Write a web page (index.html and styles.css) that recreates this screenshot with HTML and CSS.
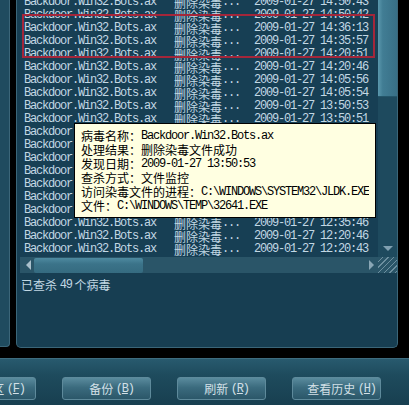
FILE: index.html
```html
<!DOCTYPE html>
<html>

<head>
    <meta charset="UTF-8">
    <title>病毒历史记录</title>
    <link rel="stylesheet" href="styles.css">
</head>

<body>
    <div class="window">
        <div class="main">
            <div class="side-strip"></div>
            <div class="panel">
                <div class="list-wrap">
                    <div class="list-view">
                        <div class="rows">
                            <div class="row"><span class="c-name a">Backdoor.Win32.Bots.ax</span><span class="c-res">删除染毒<span class="a">...</span></span><span class="c-time a">2009-01-27 14:50:43</span></div>
                            <div class="row"><span class="c-name a">Backdoor.Win32.Bots.ax</span><span class="c-res">删除染毒<span class="a">...</span></span><span class="c-time a">2009-01-27 14:50:42</span></div>
                            <div class="row"><span class="c-name a">Backdoor.Win32.Bots.ax</span><span class="c-res">删除染毒<span class="a">...</span></span><span class="c-time a">2009-01-27 14:36:13</span></div>
                            <div class="row"><span class="c-name a">Backdoor.Win32.Bots.ax</span><span class="c-res">删除染毒<span class="a">...</span></span><span class="c-time a">2009-01-27 14:35:57</span></div>
                            <div class="row"><span class="c-name a">Backdoor.Win32.Bots.ax</span><span class="c-res">删除染毒<span class="a">...</span></span><span class="c-time a">2009-01-27 14:20:51</span></div>
                            <div class="row"><span class="c-name a">Backdoor.Win32.Bots.ax</span><span class="c-res">删除染毒<span class="a">...</span></span><span class="c-time a">2009-01-27 14:20:46</span></div>
                            <div class="row"><span class="c-name a">Backdoor.Win32.Bots.ax</span><span class="c-res">删除染毒<span class="a">...</span></span><span class="c-time a">2009-01-27 14:05:56</span></div>
                            <div class="row"><span class="c-name a">Backdoor.Win32.Bots.ax</span><span class="c-res">删除染毒<span class="a">...</span></span><span class="c-time a">2009-01-27 14:05:54</span></div>
                            <div class="row"><span class="c-name a">Backdoor.Win32.Bots.ax</span><span class="c-res">删除染毒<span class="a">...</span></span><span class="c-time a">2009-01-27 13:50:53</span></div>
                            <div class="row"><span class="c-name a">Backdoor.Win32.Bots.ax</span><span class="c-res">删除染毒<span class="a">...</span></span><span class="c-time a">2009-01-27 13:50:51</span></div>
                            <div class="row"><span class="c-name a">Backdoor.Win32.Bots.ax</span><span class="c-res">删除染毒<span class="a">...</span></span><span class="c-time a">2009-01-27 13:35:50</span></div>
                            <div class="row"><span class="c-name a">Backdoor.Win32.Bots.ax</span><span class="c-res">删除染毒<span class="a">...</span></span><span class="c-time a">2009-01-27 13:35:48</span></div>
                            <div class="row"><span class="c-name a">Backdoor.Win32.Bots.ax</span><span class="c-res">删除染毒<span class="a">...</span></span><span class="c-time a">2009-01-27 13:20:49</span></div>
                            <div class="row"><span class="c-name a">Backdoor.Win32.Bots.ax</span><span class="c-res">删除染毒<span class="a">...</span></span><span class="c-time a">2009-01-27 13:20:47</span></div>
                            <div class="row"><span class="c-name a">Backdoor.Win32.Bots.ax</span><span class="c-res">删除染毒<span class="a">...</span></span><span class="c-time a">2009-01-27 13:05:48</span></div>
                            <div class="row"><span class="c-name a">Backdoor.Win32.Bots.ax</span><span class="c-res">删除染毒<span class="a">...</span></span><span class="c-time a">2009-01-27 12:50:47</span></div>
                            <div class="row"><span class="c-name a">Backdoor.Win32.Bots.ax</span><span class="c-res">删除染毒<span class="a">...</span></span><span class="c-time a">2009-01-27 12:50:45</span></div>
                            <div class="row"><span class="c-name a">Backdoor.Win32.Bots.ax</span><span class="c-res">删除染毒<span class="a">...</span></span><span class="c-time a">2009-01-27 12:35:46</span></div>
                            <div class="row"><span class="c-name a">Backdoor.Win32.Bots.ax</span><span class="c-res">删除染毒<span class="a">...</span></span><span class="c-time a">2009-01-27 12:20:46</span></div>
                            <div class="row"><span class="c-name a">Backdoor.Win32.Bots.ax</span><span class="c-res">删除染毒<span class="a">...</span></span><span class="c-time a">2009-01-27 12:20:43</span></div>
                        </div>

                        <!-- 标注框 -->
                        <div class="mark"></div>

                        <!-- 悬停提示 -->
                        <div class="tip">
                            <div class="tip-line">病毒名称：<span class="a">Backdoor.Win32.Bots.ax</span></div>
                            <div class="tip-line">处理结果：删除染毒文件成功</div>
                            <div class="tip-line">发现日期：<span class="a">2009-01-27 13:50:53</span></div>
                            <div class="tip-line">查杀方式：文件监控</div>
                            <div class="tip-line">访问染毒文件的进程：<span class="a">C:\WINDOWS\SYSTEM32\JLDK.EXE</span></div>
                            <div class="tip-line">文件：<span class="a">C:\WINDOWS\TEMP\32641.EXE</span></div>
                        </div>
                    </div>
                    <div class="vscroll">
                        <div class="vthumb"></div>
                        <div class="vtrack"><span class="arrow-down"></span></div>
                    </div>
                </div>
                <div class="hbar">
                    <div class="hscroll">
                        <span class="arrow-left"></span>
                        <div class="hthumb"></div>
                        <span class="arrow-right"></span>
                    </div>
                    <div class="grip"></div>
                </div>
                <div class="status">已查杀 <span class="a">49</span> 个病毒</div>
            </div>
        </div>

        <div class="toolbar">
            <button class="tool-button">隔离区 <span class="a">(<u>F</u>)</span></button>
            <button class="tool-button">备份 <span class="a">(<u>B</u>)</span></button>
            <button class="tool-button">刷新 <span class="a">(<u>R</u>)</span></button>
            <button class="tool-button">查看历史 <span class="a">(<u>H</u>)</span></button>
        </div>
    </div>
</body>

</html>
```

FILE: styles.css
```css
:root {
    --text-color: #c2d8e4;
    --list-bg: #173f54;
    --panel-bg: #173e52;
    --edge-color: #3b6679;
}

body {
    margin: 0;
    background-color: #000;
    font-family: "Noto Sans CJK SC", sans-serif;
    font-size: 12px;
    color: var(--text-color);
}

.window {
    width: 409px;
    height: 405px;
    overflow: hidden;
}

.a {
    font-family: "Liberation Mono", "Noto Sans CJK SC", monospace;
    font-size: 12px;
    letter-spacing: -1.2px;
    vertical-align: top;
}

.main {
    display: flex;
    height: 348px;
}

.side-strip {
    width: 9px;
    height: 346px;
    background-color: #1f4b5f;
    border-right: 1px solid var(--edge-color);
    border-bottom: 1px solid var(--edge-color);
    border-radius: 0 0 4px 0;
    margin-right: 6px;
}

.panel {
    width: 380px;
    height: 347px;
    background-color: var(--panel-bg);
    border: 1px solid var(--edge-color);
    border-top: none;
    border-radius: 0 0 5px 5px;
}

.list-wrap {
    display: flex;
    height: 257px;
    margin-left: 3px;
}

.list-view {
    position: relative;
    width: 358px;
    overflow: hidden;
    background-color: var(--list-bg);
}

.rows {
    margin-top: -4px;
}

.row {
    display: flex;
    height: 13px;
    line-height: 13px;
    padding-left: 4px;
    white-space: nowrap;
    overflow: hidden;
}

.c-name {
    width: 150px;
    flex: none;
}

.c-res {
    width: 80px;
    flex: none;
}

.mark {
    position: absolute;
    left: 2px;
    top: 14px;
    width: 349px;
    height: 40px;
    border: 2px solid #a3263a;
}

.tip {
    position: absolute;
    left: 54px;
    top: 123px;
    width: 288px;
    height: 85px;
    padding: 5px 6px 3px;
    background-color: #ffffe1;
    border: 1px solid #000;
    color: #000;
    white-space: nowrap;
}

.tip-line {
    height: 14px;
    line-height: 14px;
    overflow: hidden;
}

.vscroll {
    width: 19px;
    display: flex;
    flex-direction: column;
}

.vthumb {
    height: 96px;
    background: linear-gradient(to right, #5b98ad, #417d94 25%, #386f86);
    border-bottom: 1px solid #24566a;
}

.vtrack {
    flex: 1;
    display: flex;
    align-items: flex-end;
    justify-content: center;
    padding-bottom: 6px;
    background-color: #1e4a5e;
}

.arrow-down {
    width: 0;
    height: 0;
    border-left: 5px solid transparent;
    border-right: 5px solid transparent;
    border-top: 5px solid #7f9fb0;
}

.hbar {
    display: flex;
    height: 16px;
    margin-left: 3px;
}

.hscroll {
    display: flex;
    align-items: center;
    width: 358px;
    background-color: #2a5568;
}

.arrow-left {
    width: 0;
    height: 0;
    margin: 0 3px 0 6px;
    border-top: 5px solid transparent;
    border-bottom: 5px solid transparent;
    border-right: 5px solid #a9c0cc;
}

.hthumb {
    width: 109px;
    height: 15px;
    background: linear-gradient(#4e8aa0, #3b7389 40%, #356b80);
    border-radius: 2px;
}

.arrow-right {
    width: 0;
    height: 0;
    margin-left: auto;
    margin-right: 4px;
    border-top: 5px solid transparent;
    border-bottom: 5px solid transparent;
    border-left: 5px solid #8aa7b6;
}

.grip {
    width: 19px;
    background: repeating-linear-gradient(135deg, #2a5568 0 3px, #6d90a0 3px 4px);
}

.status {
    height: 14px;
    padding: 5px 0 0 4px;
    line-height: 14px;
}

.toolbar {
    display: flex;
    gap: 26px;
    height: 47px;
    margin-top: 10px;
    padding-top: 18px;
    box-sizing: border-box;
    border-top: 1px solid #3e6c7f;
    background: linear-gradient(#285a6e, #1e4b5d 35%, #183f50);
}

.tool-button {
    flex: none;
    width: 89px;
    height: 23px;
    padding: 0 0 0 10px;
    font-family: "Noto Sans CJK SC", sans-serif;
    font-size: 12px;
    line-height: 14px;
    color: #d3e0e7;
    border: 1px solid #5e8a9b;
    border-radius: 3px;
    background: linear-gradient(#5a8b9d, #3b6b7e 45%, #2b5769);
    white-space: nowrap;
}

.tool-button:first-child {
    margin-left: -53px;
}
```
